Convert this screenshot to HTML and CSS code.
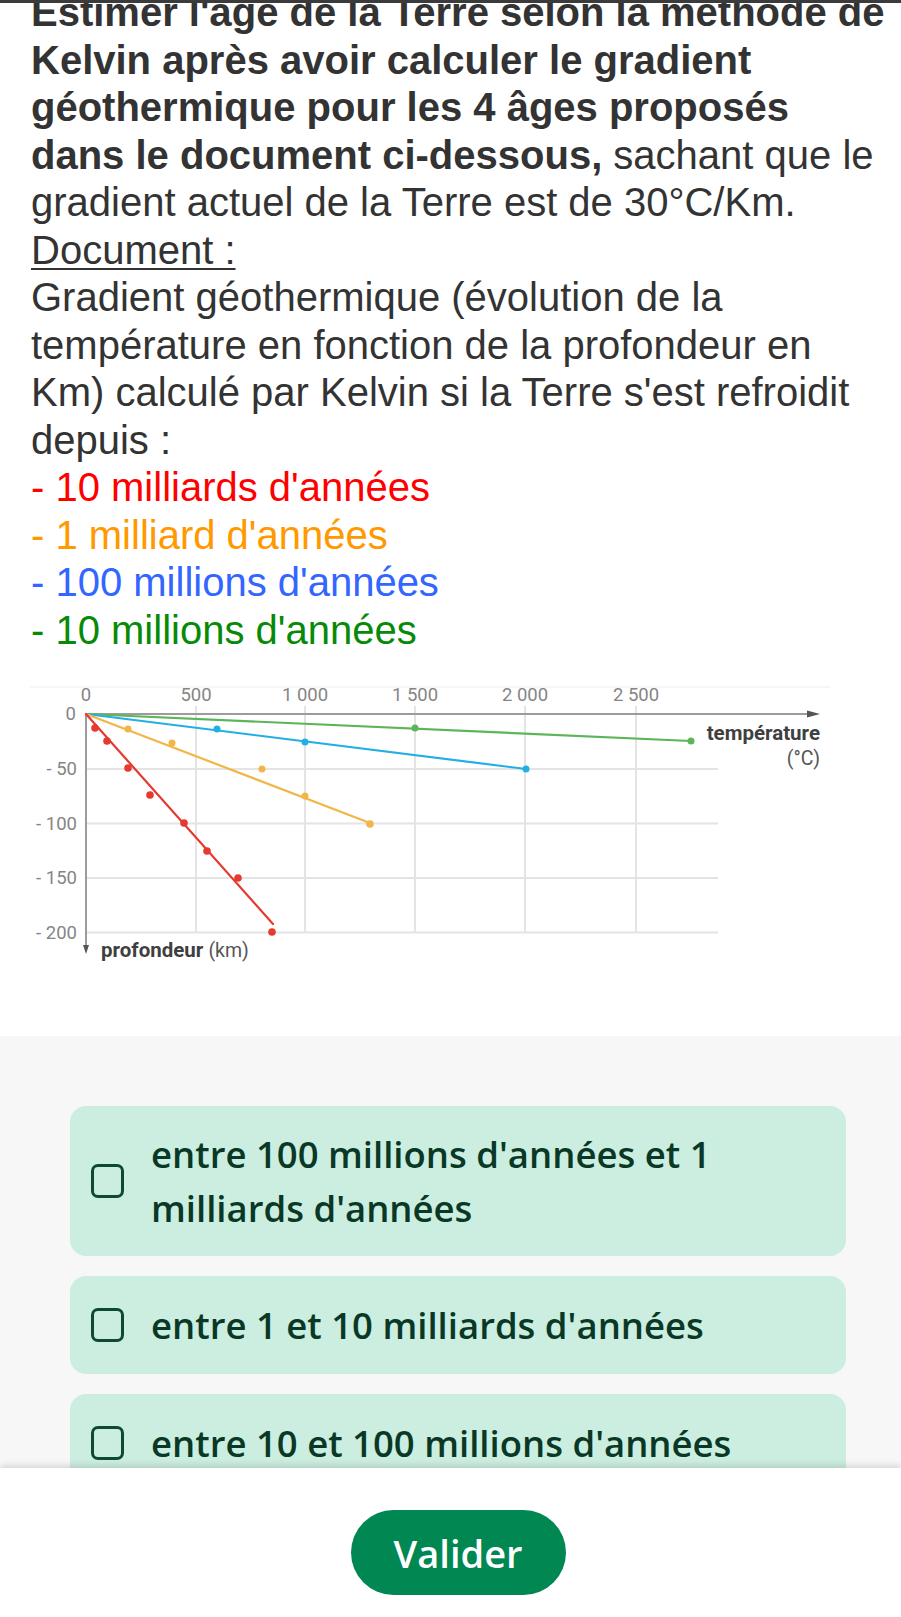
FILE: index.html
```html
<!DOCTYPE html>
<html lang="fr">
<head>
<meta charset="utf-8">
<title>Exercice</title>
<link rel="stylesheet" href="styles.css">
</head>
<body>
<div class="topline"></div>
<main class="doc">
  <p class="statement"><b>Estimer l'âge de la Terre selon la méthode de<br>Kelvin après avoir calculer le gradient<br>géothermique pour les 4 âges proposés<br>dans le document ci-dessous,</b> sachant que le<br>gradient actuel de la Terre est de 30°C/Km.<br><u>Document :</u><br>Gradient géothermique (évolution de la<br>température en fonction de la profondeur en<br>Km) calculé par Kelvin si la Terre s'est refroidit<br>depuis :<br><span class="c-red">- 10 milliards d'années</span><br><span class="c-orange">- 1 milliard d'années</span><br><span class="c-blue">- 100 millions d'années</span><br><span class="c-green">- 10 millions d'années</span></p>
  <svg class="chart" viewBox="0 654 901 382" width="901" height="382" xmlns="http://www.w3.org/2000/svg">
    <line x1="30" y1="687" x2="830" y2="687" stroke="#f3f3f3" stroke-width="1.5"/>
    <g stroke="#e4e4e4" stroke-width="2">
      <line x1="86" y1="769" x2="718" y2="769"/>
      <line x1="86" y1="823.5" x2="718" y2="823.5"/>
      <line x1="86" y1="878" x2="718" y2="878"/>
      <line x1="86" y1="932.5" x2="718" y2="932.5"/>
      <line x1="196" y1="706" x2="196" y2="933"/>
      <line x1="305" y1="706" x2="305" y2="933"/>
      <line x1="415" y1="706" x2="415" y2="933"/>
      <line x1="525" y1="706" x2="525" y2="933"/>
      <line x1="636" y1="706" x2="636" y2="933"/>
    </g>
    <g stroke="#9c9c9c" stroke-width="2">
      <line x1="86" y1="714" x2="812" y2="714"/>
      <line x1="86" y1="714" x2="86" y2="948"/>
    </g>
    <polygon points="807,710.5 820,714 807,717.5" fill="#555"/>
    <polygon points="83,945 86,954 89,945" fill="#555"/>
    <g class="tick" text-anchor="middle">
      <text x="86" y="701">0</text>
      <text x="196" y="701">500</text>
      <text x="305" y="701">1 000</text>
      <text x="415" y="701">1 500</text>
      <text x="525" y="701">2 000</text>
      <text x="636" y="701">2 500</text>
    </g>
    <g class="tick" text-anchor="end">
      <text x="76" y="720">0</text>
      <text x="77" y="775">- 50</text>
      <text x="77" y="830">- 100</text>
      <text x="77" y="884">- 150</text>
      <text x="77" y="939">- 200</text>
    </g>
    <text class="axis-title" x="820" y="740" text-anchor="end">température</text>
    <text class="axis-unit" x="820" y="765" text-anchor="end">(°C)</text>
    <text class="axis-title" x="101" y="957">profondeur <tspan class="axis-unit">(km)</tspan></text>

    <g fill="none" stroke-width="2.2" stroke-linecap="round">
      <line x1="86" y1="714" x2="691" y2="741" stroke="#5db55a"/>
      <line x1="86" y1="714" x2="526" y2="769" stroke="#24afe3"/>
      <line x1="86" y1="714" x2="370" y2="823" stroke="#f2b648"/>
      <line x1="86" y1="714" x2="273" y2="924" stroke="#e6392f"/>
    </g>
    <g fill="#5db55a">
      <circle cx="415" cy="728" r="3.5"/>
      <circle cx="691" cy="741" r="3.5"/>
    </g>
    <g fill="#24afe3">
      <circle cx="217" cy="729" r="3.5"/>
      <circle cx="305" cy="742" r="3.5"/>
      <circle cx="526" cy="769" r="3.5"/>
    </g>
    <g fill="#f2b648">
      <circle cx="128" cy="729" r="3.5"/>
      <circle cx="172" cy="743" r="3.5"/>
      <circle cx="262" cy="769" r="3.5"/>
      <circle cx="305" cy="796" r="3.5"/>
      <circle cx="370" cy="824" r="3.8"/>
    </g>
    <g fill="#e6392f">
      <circle cx="95" cy="728" r="3.8"/>
      <circle cx="107" cy="741" r="3.8"/>
      <circle cx="128" cy="768" r="3.8"/>
      <circle cx="150" cy="795" r="3.8"/>
      <circle cx="184" cy="823" r="3.8"/>
      <circle cx="207" cy="851" r="3.8"/>
      <circle cx="238" cy="878" r="3.8"/>
      <circle cx="272" cy="932" r="3.8"/>
    </g>
  </svg>
</main>

<section class="answers">
  <div class="options">
    <label class="option">
      <span class="box"></span>
      <span class="option-text">entre 100 millions d'années et 1<br>milliards d'années</span>
    </label>
    <label class="option">
      <span class="box"></span>
      <span class="option-text">entre 1 et 10 milliards d'années</span>
    </label>
    <label class="option">
      <span class="box"></span>
      <span class="option-text">entre 10 et 100 millions d'années</span>
    </label>
  </div>
</section>

<footer class="action-bar">
  <button class="validate" type="button">Valider</button>
</footer>
</body>
</html>
```

FILE: styles.css
```css
html, body {
  margin: 0;
  padding: 0;
}

body {
  width: 901px;
  height: 1617px;
  overflow: hidden;
  background: #ffffff;
  font-family: "Liberation Sans", Arial, sans-serif;
}

.topline {
  position: fixed;
  top: 0;
  left: 0;
  right: 0;
  height: 3px;
  background: #3b3b3b;
  z-index: 5;
}

.doc {
  display: flex;
  flex-direction: column;
}

.statement {
  margin: -11px 0 0;
  padding-left: 31px;
  font-family: "Liberation Sans", Arial, sans-serif;
  font-size: 40px;
  line-height: 47.5px;
  color: #333333;
  white-space: nowrap;
}

.statement b {
  font-weight: 700;
}

.statement u {
  text-decoration-thickness: 2px;
  text-underline-offset: 4px;
}

.c-red { color: #ff0000; }
.c-orange { color: #ff9900; }
.c-blue { color: #3366ff; }
.c-green { color: #078a07; }

.chart {
  display: block;
}

.tick text {
  font-family: "Liberation Sans Narrow", "Roboto", sans-serif;
  font-size: 18.5px;
  fill: #858585;
}

.axis-title {
  font-family: Roboto, sans-serif;
  font-weight: 700;
  font-size: 20.5px;
  fill: #3f3f3f;
}

.axis-unit {
  font-family: Roboto, sans-serif;
  font-weight: 400;
  font-size: 19.5px;
  fill: #555555;
}

.answers {
  background: #f7f7f7;
  min-height: 581px;
  padding-top: 70px;
  box-sizing: border-box;
}

.options {
  margin-left: 70px;
  width: 776px;
  display: flex;
  flex-direction: column;
  gap: 20px;
}

.option {
  display: flex;
  align-items: center;
  gap: 27px;
  min-height: 98px;
  box-sizing: border-box;
  padding: 21px 20px 21px 21px;
  background: #cbeee0;
  border-radius: 16px;
  font-family: "Open Sans", Lato, sans-serif;
  font-weight: 600;
  font-size: 36.5px;
  line-height: 54px;
  color: #0a3826;
}

.box {
  flex: none;
  width: 33px;
  height: 34px;
  box-sizing: border-box;
  border: 3px solid #0e4a32;
  border-radius: 7px;
}

.action-bar {
  position: fixed;
  left: 0;
  right: 0;
  bottom: 0;
  height: 149px;
  background: #ffffff;
  box-shadow: 0 -3px 6px rgba(0, 0, 0, 0.12);
  display: flex;
  justify-content: center;
  align-items: flex-start;
  padding-left: 15px;
  box-sizing: border-box;
}

.validate {
  margin-top: 42px;
  width: 215px;
  height: 85px;
  border: none;
  border-radius: 43px;
  background: #018752;
  color: #ffffff;
  font-family: "Open Sans", Lato, sans-serif;
  font-weight: 600;
  font-size: 38px;
  padding: 0;
}
```
